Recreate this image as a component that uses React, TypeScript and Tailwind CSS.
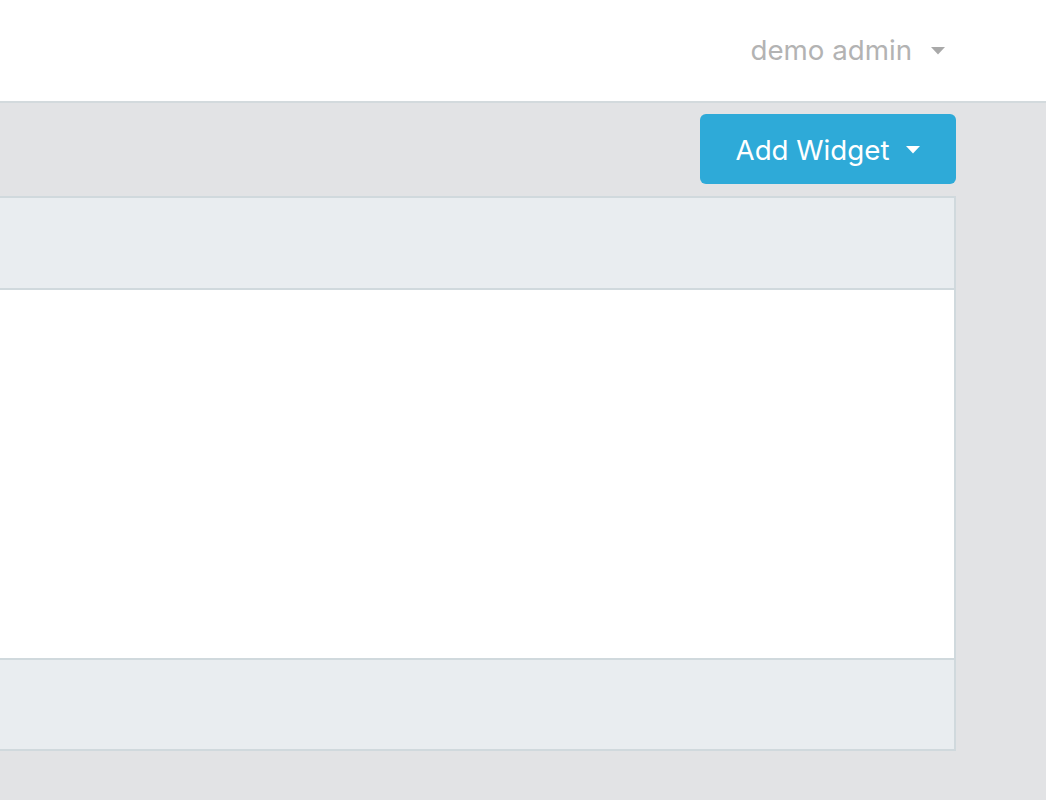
import React from "react";

function Caret({ className }: { className: string }) {
  return (
    <svg width="14" height="8" viewBox="0 0 14 8" className={className}>
      <path d="M0 0 L14 0 L7 7.5 Z" fill="currentColor" />
    </svg>
  );
}

export default function App() {
  return (
    <div
      className="w-[1046px] h-[800px] bg-[#e2e3e5] flex flex-col overflow-hidden"
      style={{ fontFamily: "Inter, 'Noto Sans', sans-serif" }}
    >
      <header className="h-[103px] shrink-0 bg-white border-b-2 border-[#d3dadd] flex items-center justify-end pr-[101px]">
        <div className="flex items-center gap-[19px] text-[#b3b3b3] text-[27.7px] leading-none">
          <span>demo admin</span>
          <Caret className="text-[#a9a9a9] mt-[1px]" />
        </div>
      </header>
      <main className="flex-1 flex flex-col items-end pr-[90px] pt-[11px]">
        <button className="w-[256px] h-[70px] rounded-[6px] bg-[#2eaad8] text-white text-[27.7px] leading-none flex items-center justify-center gap-[17px] pt-[3px]">
          <span>Add Widget</span>
          <Caret className="text-white mt-[-1px]" />
        </button>
        <section className="mt-[12px] w-[958px] border-2 border-l-0 border-[#d0d9dd] flex flex-col">
          <div className="h-[92px] bg-[#e9edf0] border-b-2 border-[#d0d9dd]" />
          <div className="h-[370px] bg-white border-b-2 border-[#d0d9dd]" />
          <div className="h-[89px] bg-[#e9edf0]" />
        </section>
      </main>
    </div>
  );
}
